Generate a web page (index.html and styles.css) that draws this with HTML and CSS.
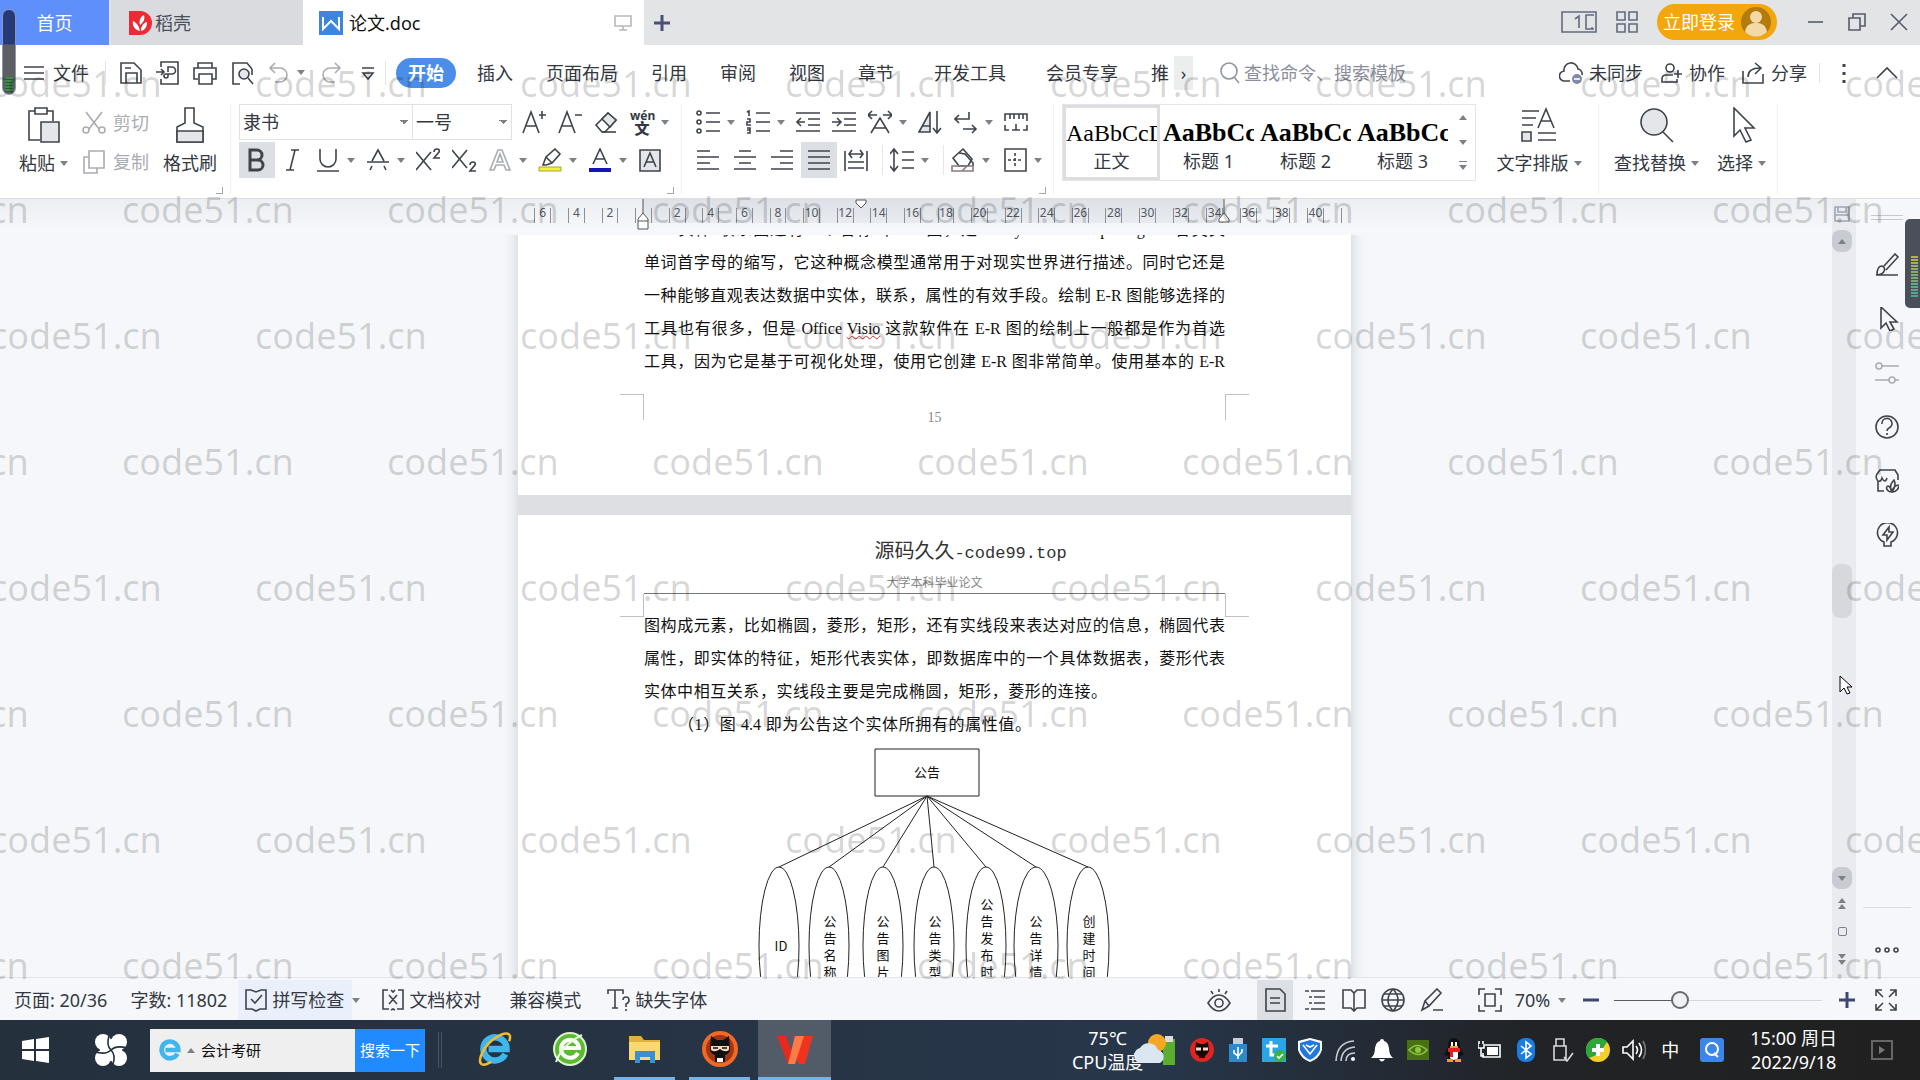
FILE: index.html
```html
<!DOCTYPE html>
<html lang="zh-CN">
<head>
    <meta charset="UTF-8">
    <meta name="viewport" content="width=device-width, initial-scale=1.0">
    <title>论文.doc</title>
    <link rel="stylesheet" href="styles.css">
</head>
<body>
    <header class="titlebar">
        <button class="tab tab-home">首页</button>
        <button class="tab tab-docer">
            <svg class="i24" viewBox="0 0 24 24"><path fill="#ee2b35" d="M1 0h11a12 12 0 0 1 0 24H1z"/><path fill="#fff" d="M12 20C7 19 4 15 5 10c4 2 6 5 7 10zM12 14c-1-4 0-8 4-10 1 4 0 7-4 10zM13 20c0-5 2-8 6-9 0 5-2 8-6 9z"/></svg>
            稻壳
        </button>
        <div class="tab tab-doc">
            <svg class="i24" viewBox="0 0 24 24"><path fill="#3c86e0" d="M0 0h24v24H0z"/><path d="M4 6v12l8-8 8 8V6" fill="none" stroke="#fff" stroke-width="2"/></svg>
            <span>论文.doc</span>
            <svg class="i18 tab-screen" viewBox="0 0 18 18"><path d="M1 2h16v10H1zM9 12v4M5 16h8" fill="none" stroke="#b5b8bd"/></svg>
        </div>
        <button class="tab-add" aria-label="新建"><svg class="i18" viewBox="0 0 18 18"><path d="M9 1v16M1 9h16" stroke="#4a4f78" stroke-width="3"/></svg></button>
        <div class="win">
            <button aria-label="布局"><svg width="36" height="22" viewBox="0 0 36 22"><path d="M1 1h34v20H1zM14 8l4-3v12M33 4h-8v14h8M30 17h2" fill="none" stroke="#626a80"/></svg></button>
            <button aria-label="应用"><svg class="i24" viewBox="0 0 24 24"><path d="M2 2h8v8H2zM14 2h8v8h-8zM2 14h8v8H2zM14 14h8v8h-8z" fill="none" stroke="#626a80"/></svg></button>
            <button class="login">立即登录
                <svg width="30" height="30" viewBox="0 0 30 30"><circle cx="15" cy="15" r="15" fill="#b57a0c"/><circle cx="15" cy="10" r="6" fill="#f3d9a6"/><path d="M4 25c1-7 5-9 11-9s10 2 11 9a15 15 0 0 1-22 0z" fill="#f3d9a6"/></svg>
            </button>
            <button aria-label="最小化"><svg class="i24" viewBox="0 0 24 24"><path class="w" d="M5 12h15"/></svg></button>
            <button aria-label="还原"><svg class="i24" viewBox="0 0 24 24"><path class="w" d="M4 8h11v12H4zM8 8V4h12v12h-5"/></svg></button>
            <button aria-label="关闭"><svg class="i24" viewBox="0 0 24 24"><path class="w" d="M4 4l16 16M20 4L4 20"/></svg></button>
        </div>
    </header>

    <nav class="menubar">
        <button class="file"><svg width="20" height="14" viewBox="0 0 20 14"><path d="M0 1h20M0 7h20M0 13h20"/></svg>文件</button>
        <div class="quick">
            <button aria-label="保存"><svg class="i24" viewBox="0 0 24 24"><path d="M2 2h13l7 7v13H2zM7 22V12h11v10M6 7h6"/></svg></button>
            <button aria-label="输出"><svg class="i24" viewBox="0 0 24 24"><path d="M5 6V1h17v22H5v-5M0 11h8M5 8l3 3-3 3M12 11V6h4a3 3 0 0 1 0 7h-4v2a2 2 0 1 1-2-2h4"/></svg></button>
            <button aria-label="打印"><svg class="i24" viewBox="0 0 24 24"><path d="M5 7V2h14v5M5 18H1V7h22v11h-4M6 13h13v10H6z"/></svg></button>
            <button aria-label="打印预览"><svg class="i24" viewBox="0 0 24 24"><path d="M22 8l-5-6H3v21h7M22 8v6"/><circle cx="14" cy="13" r="5" fill="#e4e6ea"/><path d="M18 17l5 6"/></svg></button>
            <button class="dim drop" aria-label="撤销"><svg class="i24" viewBox="0 0 24 24"><path d="M8 2L3 7l5 5M3 7h10a7 7 0 0 1 0 14H8"/></svg><i class="caret"></i></button>
            <button class="dim" aria-label="恢复"><svg class="i24" viewBox="0 0 24 24"><path d="M16 2l5 5-5 5M21 7H11a7 7 0 0 0 0 14h5"/></svg></button>
            <button aria-label="更多"><svg class="i24" viewBox="0 0 24 24"><path d="M6 7h12M7 12h10l-5 6z"/></svg></button>
        </div>
        <div class="tabs">
            <button class="on">开始</button>
            <button>插入</button>
            <button>页面布局</button>
            <button>引用</button>
            <button>审阅</button>
            <button>视图</button>
            <button>章节</button>
            <button class="wide">开发工具</button>
            <button class="wide">会员专享</button>
            <button class="cut">推</button>
        </div>
        <button class="next" aria-label="更多选项卡">›</button>
        <label class="search">
            <svg width="20" height="22" viewBox="0 0 20 22"><circle cx="9" cy="9" r="8"/><path d="M14 15l5 6"/></svg>
            <input type="text" placeholder="查找命令、搜索模板">
        </label>
        <div class="account">
            <button><svg class="i24" viewBox="0 0 24 24"><path d="M11 20H6a5 5 0 0 1-1-10 7 7 0 0 1 14-2 5 5 0 0 1 4 6"/><circle cx="18" cy="18" r="5" fill="#7f89a8" stroke="none"/><path d="M15 18h6" stroke="#fff"/></svg>未同步</button>
            <button><svg class="i24" viewBox="0 0 24 24"><circle cx="11" cy="7" r="4"/><path d="M14 14H7q-4 0-4 4v3h15v-3M15 13h8M19 9v8"/></svg>协作</button>
            <button><svg class="i24" viewBox="0 0 24 24"><path d="M2 10v12h20V13M7 16c0-6 4-9 12-9M14 2l6 5-6 6"/></svg>分享</button>
            <button class="dots" aria-label="更多"><svg width="6" height="20" viewBox="0 0 6 20"><path d="M3 1v3M3 9v3M3 17v3" stroke-width="3"/></svg></button>
            <button aria-label="收起"><svg class="i24" viewBox="0 0 24 24"><path d="M2 17L12 7l10 10"/></svg></button>
        </div>
    </nav>

    <section class="ribbon">
        <div class="group clip">
            <button class="big"><svg width="34" height="36" viewBox="0 0 34 36"><path d="M8 4H2v29h11M20 4h6v10M8 1h12v6H8z"/><path d="M14 15h18v20H14z" fill="#e4e6ea"/></svg><span>粘贴<i class="caret"></i></span></button>
            <div class="stack">
                <button class="dim"><svg class="i24" viewBox="0 0 24 24"><path d="M4 1l13 17M20 1L7 18"/><circle cx="4" cy="19" r="3"/><circle cx="20" cy="19" r="3"/></svg>剪切</button>
                <button class="dim"><svg class="i24" viewBox="0 0 24 24"><path d="M7 1h15v17H7zM7 7H2v16h13v-5"/></svg>复制</button>
            </div>
            <button class="big brush"><svg width="30" height="36" viewBox="0 0 30 36"><path d="M2 35V20l8-4V1h9v15l9 4v15z"/><path d="M2 24h26v11H2z" fill="#e4e6ea"/></svg><span>格式刷</span></button>
            <i class="corner"></i>
        </div>

        <div class="group font">
            <div class="row">
                <select class="face" aria-label="字体"><option>隶书</option></select>
                <select class="size" aria-label="字号"><option>一号</option></select>
                <button aria-label="增大字号"><svg class="i24" viewBox="0 0 24 24"><path d="M1 23L9 2l8 21M4 16h10M17 5h7M20 1v8"/></svg></button>
                <button aria-label="减小字号"><svg class="i24" viewBox="0 0 24 24"><path d="M1 23L9 2l8 21M4 16h10M17 5h7"/></svg></button>
                <button aria-label="清除格式"><svg class="i24" viewBox="0 0 24 24"><path d="M2 15L14 3l8 7-11 12H8z"/><path d="M8 9l8 8 6-7-8-7z" fill="#e4e6ea"/><path d="M8 22h14"/></svg></button>
                <button class="drop" aria-label="拼音指南"><span class="wen">wén<b>文</b></span><i class="caret"></i></button>
            </div>
            <div class="row">
                <button class="pressed" aria-label="加粗"><svg class="i24" viewBox="0 0 24 24"><path d="M5 2h7a5 5 0 0 1 0 10H5zM5 12h8a5 5 0 0 1 0 10H5z" stroke-width="3"/></svg></button>
                <button aria-label="倾斜"><svg class="i24" viewBox="0 0 24 24"><path d="M10 2h8M5 22h8M14 2L9 22"/></svg></button>
                <button class="drop" aria-label="下划线"><svg class="i24" viewBox="0 0 24 24"><path d="M4 1v10a8 8 0 0 0 16 0V1M1 23h22"/></svg><i class="caret"></i></button>
                <button class="drop" aria-label="删除线"><svg class="i24" viewBox="0 0 24 24"><path d="M6 13l6-11 6 11M1 14h22M4 22l2-4M20 22l-2-4"/></svg><i class="caret"></i></button>
                <button aria-label="上标"><svg class="i24" viewBox="0 0 24 24"><path d="M0 4l15 18M15 4L0 22M18 4q0-3 3-3t2 3l-5 6h6"/></svg></button>
                <button aria-label="下标"><svg class="i24" viewBox="0 0 24 24"><path d="M0 2l15 18M15 2L0 20M18 17q0-3 3-3t2 3l-5 6h6"/></svg></button>
                <button class="drop dim" aria-label="文字效果"><svg class="i24" viewBox="0 0 24 24"><path d="M2 22L10 2h4l8 20h-4l-2-5H8l-2 5zM9 14h6l-3-8z"/></svg><i class="caret"></i></button>
                <button class="drop" aria-label="突出显示"><svg class="i24" viewBox="0 0 24 24"><path d="M5 17l3-8 9-8 5 5-8 9-6 2zM8 9l6 6"/><path d="M1 19h22v4H1z" fill="#f4f03c" stroke="#a8a43a" stroke-width="1"/></svg><i class="caret"></i></button>
                <button class="drop" aria-label="字体颜色"><svg class="i24" viewBox="0 0 24 24"><path d="M5 16l7-15 7 15M7 11h10"/><path d="M1 22h22" stroke="#1414b8" stroke-width="4"/></svg><i class="caret"></i></button>
                <button aria-label="字符底纹"><svg class="i24" viewBox="0 0 24 24"><path d="M2 2h20v21H2z" fill="#e4e6ea"/><path d="M6 19l6-14 6 14M8 14h8"/></svg></button>
            </div>
            <i class="corner"></i>
        </div>

        <div class="group para">
            <div class="row">
                <button class="drop" aria-label="项目符号"><svg class="i24" viewBox="0 0 24 24"><path d="M10 3h14M10 12h14M10 21h14"/><circle cx="3" cy="3" r="2"/><circle cx="3" cy="12" r="2"/><circle cx="3" cy="21" r="2"/></svg><i class="caret"></i></button>
                <button class="drop" aria-label="编号"><svg class="i24" viewBox="0 0 24 24"><path d="M10 3h14M10 12h14M10 21h14M1 2l2-1v5M1 9h3v3H1v3h4M1 18h3v5H1M1 20h3"/></svg><i class="caret"></i></button>
                <button aria-label="减少缩进"><svg class="i24" viewBox="0 0 24 24"><path d="M0 3h24M12 9h12M12 15h12M0 21h24M1 12h8M5 8l-4 4 4 4"/></svg></button>
                <button aria-label="增加缩进"><svg class="i24" viewBox="0 0 24 24"><path d="M0 3h24M12 9h12M12 15h12M0 21h24M0 12h8M5 8l4 4-4 4"/></svg></button>
                <button class="drop" aria-label="中文版式"><svg class="i24" viewBox="0 0 24 24"><path d="M3 23l9-15 9 15M6 18h12M0 5h9M4 1L0 5l4 4M24 5h-9M20 1l4 4-4 4"/></svg><i class="caret"></i></button>
                <button aria-label="排序"><svg class="i24" viewBox="0 0 24 24"><path d="M1 22L12 2v20zM4 16h8" fill="#e4e6ea"/><path d="M19 1v21M15 18l4 5 4-5"/></svg></button>
                <button class="drop" aria-label="编辑标记"><svg class="i24" viewBox="0 0 24 24"><path d="M15 2v7H1M5 5L1 9l4 4M9 19h13M18 15l4 4-4 4"/></svg><i class="caret"></i></button>
                <button aria-label="制表位"><svg class="i24" viewBox="0 0 24 24"><path d="M1 11V4h22v7M6 4v5M10 4v5M15 4v5M19 4v5M5 20H1v-5M19 20h4v-5M8 20h8M12 20v-6"/></svg></button>
            </div>
            <div class="row">
                <button aria-label="左对齐"><svg class="i24" viewBox="0 0 24 24"><path d="M1 3h13M1 9h22M1 15h13M1 21h22"/></svg></button>
                <button aria-label="居中"><svg class="i24" viewBox="0 0 24 24"><path d="M6 3h12M1 9h22M6 15h12M1 21h22"/></svg></button>
                <button aria-label="右对齐"><svg class="i24" viewBox="0 0 24 24"><path d="M10 3h13M1 9h22M10 15h13M1 21h22"/></svg></button>
                <button class="pressed" aria-label="两端对齐"><svg class="i24" viewBox="0 0 24 24"><path d="M1 3h22M1 9h22M1 15h22M1 21h22"/></svg></button>
                <button aria-label="分散对齐"><svg class="i24" viewBox="0 0 24 24"><path d="M1 3v20M23 3v20M4 14h16M4 20h16M5 6h14M8 2L5 6l3 4M16 2l3 4-3 4"/></svg></button>
                <button class="drop sep" aria-label="行距"><svg class="i24" viewBox="0 0 24 24"><path d="M4 2v20M0 6l4-5 4 5M0 18l4 5 4-5M12 4h12M12 12h12M12 20h12"/></svg><i class="caret"></i></button>
                <button class="drop sep" aria-label="底纹"><svg class="i24" viewBox="0 0 24 24"><path d="M12 1L2 10l6 8h9l4-7zM8 5l6 1 8 9v3"/><path d="M1 18h21v5H1zM11 23l5-5" stroke="#8a7a80"/></svg><i class="caret"></i></button>
                <button class="drop" aria-label="边框"><svg class="i24" viewBox="0 0 24 24"><path d="M2 1h21v22H2z"/><path d="M12 5v15M5 12h15" stroke-dasharray="3 2"/></svg><i class="caret"></i></button>
            </div>
            <i class="corner"></i>
        </div>

        <div class="gallery">
            <button class="style current"><span class="sample">AaBbCcDd</span>正文</button>
            <button class="style"><span class="sample head">AaBbCc</span>标题 1</button>
            <button class="style"><span class="sample head">AaBbCc</span>标题 2</button>
            <button class="style"><span class="sample head">AaBbCc</span>标题 3</button>
            <div class="gallery-nav">
                <button aria-label="上"><i class="caret up"></i></button>
                <button aria-label="下"><i class="caret"></i></button>
                <button class="more" aria-label="展开"><i class="caret"></i></button>
            </div>
        </div>

        <div class="group tools">
            <button class="big"><svg width="36" height="36" viewBox="0 0 36 36"><path d="M1 4h17M1 11h14M1 18h11M17 21l8-19 8 19M20 14h10M17 26h18M17 33h18"/><path d="M1 25h9v9H1z" fill="#e4e6ea"/></svg><span>文字排版<i class="caret"></i></span></button>
        </div>
        <div class="group tools pair">
            <button class="big"><svg width="36" height="36" viewBox="0 0 36 36"><circle cx="15" cy="15" r="13" fill="#e4e6ea"/><path d="M24 25l10 10"/></svg><span>查找替换<i class="caret"></i></span></button>
            <button class="big"><svg width="36" height="36" viewBox="0 0 36 36"><path d="M10 1v28l6-6 6 12 5-2-6-12h9z"/></svg><span>选择<i class="caret"></i></span></button>
        </div>
    </section>

    <main class="work">
        <div class="desk">
            <div class="ruler">
                <div class="scale">
                    <div><b>6</b></div><div><b>4</b></div><div><b>2</b></div><div><b></b></div>
                    <div><b>2</b></div><div><b>4</b></div><div><b>6</b></div><div><b>8</b></div><div><b>10</b></div>
                    <div><b>12</b></div><div><b>14</b></div><div><b>16</b></div><div><b>18</b></div><div><b>20</b></div>
                    <div><b>22</b></div><div><b>24</b></div><div><b>26</b></div><div><b>28</b></div><div><b>30</b></div>
                    <div><b>32</b></div><div><b>34</b></div><div><b>36</b></div><div><b>38</b></div><div><b>40</b></div>
                    <div><b class="end"></b></div>
                    <svg class="mark left" viewBox="0 0 12 32"><path d="M6 0v14l-5 6v10h10V20L6 14M1 22h10"/></svg>
                    <svg class="mark first" viewBox="0 0 12 32"><path d="M1 1h10v3L6 9 1 4z"/></svg>
                    <svg class="mark right" viewBox="0 0 12 32"><path d="M6 0v14l-5 6v3h10v-3l-5-6"/></svg>
                </div>
            </div>
            <div class="pane">
                <div class="pages">
                    <article class="page first-page">
                        <p class="line indent">实体-联系图还有一个名称叫 E-R 图，是 Entity Relationship Diagram 各英文</p>
                        <p class="line">单词首字母的缩写，它这种概念模型通常用于对现实世界进行描述。同时它还是</p>
                        <p class="line">一种能够直观表达数据中实体，联系，属性的有效手段。绘制 E-R 图能够选择的</p>
                        <p class="line">工具也有很多，但是 Office <u>Visio</u> 这款软件在 E-R 图的绘制上一般都是作为首选</p>
                        <p class="line">工具，因为它是基于可视化处理，使用它创建 E-R 图非常简单。使用基本的 E-R</p>
                        <footer class="page-foot"><i></i><span>15</span><i></i></footer>
                    </article>
                    <article class="page">
                        <header class="page-head">
                            <h1>源码久久<span>-code99.top</span></h1>
                            <h2>大学本科毕业论文</h2>
                        </header>
                        <div class="crop"><i></i><i></i></div>
                        <p class="line">图构成元素，比如椭圆，菱形，矩形，还有实线段来表达对应的信息，椭圆代表</p>
                        <p class="line">属性，即实体的特征，矩形代表实体，即数据库中的一个具体数据表，菱形代表</p>
                        <p class="line short">实体中相互关系，实线段主要是完成椭圆，矩形，菱形的连接。</p>
                        <p class="line caption">（1）图 4.4 即为公告这个实体所拥有的属性值。</p>
                        <svg class="diagram" width="360" height="290" viewBox="0 0 360 290">
                            <path d="M121 8h104v47H121zM173 55L25 126M173 55L75 126M173 55l-44 71M173 55l7 71M173 55l59 71M173 55l109 71M173 55l161 71"/>
                            <ellipse cx="25" cy="205" rx="20" ry="79"/><ellipse cx="75" cy="205" rx="20" ry="79"/>
                            <ellipse cx="129" cy="205" rx="20" ry="79"/><ellipse cx="180" cy="205" rx="20" ry="79"/>
                            <ellipse cx="232" cy="205" rx="20" ry="79"/><ellipse cx="282" cy="205" rx="22" ry="79"/>
                            <ellipse cx="334" cy="205" rx="21" ry="79"/>
                            <text x="173" y="36">公告</text>
                            <text x="27" y="210">ID</text>
                            <text><tspan x="76" y="185">公</tspan><tspan x="76" y="202">告</tspan><tspan x="76" y="219">名</tspan><tspan x="76" y="236">称</tspan></text>
                            <text><tspan x="129" y="185">公</tspan><tspan x="129" y="202">告</tspan><tspan x="129" y="219">图</tspan><tspan x="129" y="236">片</tspan></text>
                            <text><tspan x="181" y="185">公</tspan><tspan x="181" y="202">告</tspan><tspan x="181" y="219">类</tspan><tspan x="181" y="236">型</tspan></text>
                            <text><tspan x="233" y="168">公</tspan><tspan x="233" y="185">告</tspan><tspan x="233" y="202">发</tspan><tspan x="233" y="219">布</tspan><tspan x="233" y="236">时</tspan></text>
                            <text><tspan x="282" y="185">公</tspan><tspan x="282" y="202">告</tspan><tspan x="282" y="219">详</tspan><tspan x="282" y="236">情</tspan></text>
                            <text><tspan x="335" y="185">创</tspan><tspan x="335" y="202">建</tspan><tspan x="335" y="219">时</tspan><tspan x="335" y="236">间</tspan></text>
                        </svg>
                    </article>
                </div>
            </div>
        </div>

        <div class="scroller">
            <svg class="i18" viewBox="0 0 18 18"><path d="M2 2h14v14H2zM5 2v5h8V2M2 10h14"/></svg>
            <button class="knob" aria-label="向上"><i class="caret up"></i></button>
            <div class="track"><div class="thumb"></div></div>
            <button class="knob" aria-label="向下"><i class="caret"></i></button>
            <button class="jump" aria-label="上一页"><i class="caret up"></i><i class="caret up"></i></button>
            <button class="jump" aria-label="选择浏览对象"><i class="square"></i></button>
            <button class="jump" aria-label="下一页"><i class="caret"></i><i class="caret"></i></button>
        </div>

        <aside class="rail">
            <i class="grip"></i>
            <button aria-label="样式"><svg class="i24" viewBox="0 0 24 24"><path d="M1 22h22M2 22c0-6 1-9 5-9 4 1 4 8-5 9M9 13L20 1l3 3-12 13"/></svg></button>
            <button aria-label="选择"><svg class="i24" viewBox="0 0 24 24"><path d="M6 0v21l5-5 4 8 4-2-4-7h7z"/></svg></button>
            <button class="dim" aria-label="属性"><svg class="i24" viewBox="0 0 24 24"><path d="M7 5h17M0 19h14M20 19h4"/><circle cx="4" cy="5" r="3"/><circle cx="17" cy="19" r="3"/></svg></button>
            <button aria-label="帮助"><svg class="i24" viewBox="0 0 24 24"><circle cx="12" cy="12" r="11"/><path d="M7 9a5 5 0 1 1 7 4q-2 1-2 3M12 18v2"/></svg></button>
            <button aria-label="商店"><svg class="i24" viewBox="0 0 24 24"><path d="M9 22H3V12q-3-3-1-7l3-4h15l3 5v5M3 12q3 1 4-3 3 6 5 0M17 23c-5 0-7-5-4-6 1 0 3 2 4 6zM17 23c-3-5-1-9 2-12 2 4 1 8-2 12zM17 23c1-5 3-7 7-7 0 4-3 7-7 7z"/></svg></button>
            <button aria-label="灵感"><svg class="i24" viewBox="0 0 24 24"><path d="M9 23v-4a10 10 0 1 1 7 0v4zM14 4l-6 8h4v5l6-8h-4z"/></svg></button>
            <button class="rail-more" aria-label="更多"><svg class="i24" viewBox="0 0 24 24"><circle cx="3" cy="12" r="2"/><circle cx="12" cy="12" r="2"/><circle cx="21" cy="12" r="2"/></svg></button>
        </aside>
    </main>

    <footer class="status">
        <button>页面: 20/36</button>
        <button class="words">字数: 11802</button>
        <button class="spell"><svg class="i24" viewBox="0 0 24 24"><path d="M7 2H2v19h6l4 2 4-2h6V2h-5l-5 2zM7 11l4 4 7-8"/></svg>拼写检查<i class="caret"></i></button>
        <button class="proof"><svg class="i24" viewBox="0 0 24 24"><path d="M7 2H2v19h6M17 2h5v19h-6M8 7l8 9M16 7l-8 9M10 2l2 2 2-2M10 22l2-1 2 1"/></svg>文档校对</button>
        <button class="compat">兼容模式</button>
        <button class="missing"><svg class="i24" viewBox="0 0 24 24"><path d="M1 6V2h15v4M8 2v18M5 20h6M16 12q0-3 3-3t3 3-3 4v3M19 21v2"/></svg>缺失字体</button>
        <div class="views">
            <button aria-label="护眼模式"><svg class="i24" viewBox="0 0 24 24"><path d="M1 15q5-8 11-8t11 8q-5 8-11 8T1 15zM12 1v3M4 3l2 3M20 3l-2 3"/><circle cx="12" cy="15" r="4"/></svg></button>
            <button class="pressed" aria-label="页面视图"><svg class="i24" viewBox="0 0 24 24"><path d="M3 1h14l5 5v17H3zM7 10h10M7 15h10"/></svg></button>
            <button aria-label="大纲"><svg class="i24" viewBox="0 0 24 24"><path d="M2 3h4M8 3h14M6 9h3M11 9h11M6 15h3M11 15h11M2 21h4M8 21h14"/></svg></button>
            <button aria-label="阅读版式"><svg class="i24" viewBox="0 0 24 24"><path d="M1 2h8l3 3 3-3h8v18h-8l-3 3-3-3H1zM12 5v17"/></svg></button>
            <button aria-label="Web版式"><svg class="i24" viewBox="0 0 24 24"><circle cx="12" cy="12" r="11"/><path d="M1 12h22M3 6h18M3 18h18M12 1q-10 11 0 22M12 1q10 11 0 22"/></svg></button>
            <button aria-label="写作模式"><svg class="i24" viewBox="0 0 24 24"><path d="M2 22l3-9L17 1l4 4L9 18zM5 13l4 5M13 22h10"/></svg></button>
            <button class="fit" aria-label="最佳显示比例"><svg class="i24" viewBox="0 0 24 24"><path d="M1 7V1h6M17 1h6v6M23 17v6h-6M7 23H1v-6M7 6h10v12H7z"/></svg></button>
            <button class="pct">70%<i class="caret"></i></button>
            <button class="step" aria-label="缩小"><svg class="i18" viewBox="0 0 18 18"><path d="M1 9h16" stroke="#3f4770" stroke-width="3"/></svg></button>
            <input type="range" min="0" max="100" value="30" aria-label="显示比例">
            <button class="step" aria-label="放大"><svg class="i18" viewBox="0 0 18 18"><path d="M9 1v16M1 9h16" stroke="#3f4770" stroke-width="3"/></svg></button>
            <button aria-label="全屏"><svg class="i24" viewBox="0 0 24 24"><path d="M2 8V2h6M2 2l7 7M16 2h6v6M22 2l-7 7M22 16v6h-6M22 22l-7-7M8 22H2v-6M2 22l7-7"/></svg></button>
        </div>
    </footer>

    <div class="taskbar">
        <button class="app start" aria-label="开始"><svg width="28" height="28" viewBox="0 0 28 28"><path fill="#fff" d="M0 5l12-2v10H0zM14 3l13-2v12H14zM0 15h12v10L0 23zM14 15h13v12l-13-2z"/></svg></button>
        <button class="app" aria-label="sogou"><svg width="34" height="34" viewBox="0 0 34 34"><g fill="#fff"><circle cx="9" cy="9" r="8"/><circle cx="25" cy="9" r="8"/><circle cx="9" cy="25" r="8"/><circle cx="25" cy="25" r="8"/><circle cx="17" cy="17" r="11"/></g><path d="M17 17Q12 12 15 3M17 17q5-5 16-2M17 17q5 5 2 14M17 17q-5 5-16 2" stroke="#25303d"/></svg></button>
        <form class="find">
            <svg width="26" height="28" viewBox="0 0 28 28"><use href="#ie"/></svg>
            <i class="caret up"></i>
            <input type="text" value="会计考研" aria-label="搜索">
            <button type="button">搜索一下</button>
        </form>
        <i class="divide"></i>
        <div class="apps">
            <button class="app" aria-label="Internet Explorer"><svg width="36" height="36" viewBox="0 0 28 28"><symbol id="ie" viewBox="0 0 28 28"><path d="M22 18a9 9 0 1 1 1-4H9" fill="none" stroke="#3fb6ee" stroke-width="5"/></symbol><use href="#ie"/><path d="M25 8c3-8-4-7-10-3C6 10-1 24 4 26c2 1 5-1 7-2" fill="none" stroke="#f0bc32" stroke-width="2"/></svg></button>
            <button class="app" aria-label="360浏览器"><svg width="36" height="36" viewBox="0 0 36 36"><circle cx="18" cy="18" r="16" fill="#5abb2f" stroke="#dff2d0" stroke-width="2"/><path d="M26 22a9 9 0 1 1 1-5H11" fill="none" stroke="#fff" stroke-width="4"/><path d="M4 31Q10 14 30 4" fill="none" stroke="#e9f8d8" stroke-width="2"/></svg></button>
            <button class="app open" aria-label="文件资源管理器"><svg width="36" height="36" viewBox="0 0 36 36"><path fill="#e3b23e" d="M2 5h12l3 4h16v20H2z"/><path fill="#fbd971" d="M2 11h31v18H2z"/><path fill="#3c8fd0" d="M8 20h20v12h-5v-6h-10v6H8z"/></svg></button>
            <button class="app open" aria-label="cat"><svg width="38" height="38" viewBox="0 0 38 38"><circle cx="19" cy="19" r="18" fill="#ee6a26"/><circle cx="19" cy="19" r="14" fill="#a53412"/><path fill="#111" d="M10 6l6 4h6l6-4 1 14q-1 4-5 5v7H14v-7q-4-1-5-5z"/><path fill="#f5d8c0" d="M10 16h18v4q-4 3-9-1-5 4-9 1z"/><path stroke="#111" d="M12 18h5M21 18h5"/><path fill="#fff" d="M16 28h6v4h-6z"/></svg></button>
            <button class="app open active" aria-label="WPS"><svg width="38" height="36" viewBox="0 0 38 36"><path fill="#e8291d" d="M1 5h9l6 16 4-9h6l-7 21h-7z"/><path fill="#f0331f" d="M28 5h9l-8 28h-6l-4-9z"/><path fill="#ff7a45" d="M19 5h9l-9 28h-7z"/></svg></button>
        </div>
        <div class="weather"><span>75℃<br>CPU温度</span>
            <svg width="46" height="34" viewBox="0 0 46 34"><path d="M32 6h12v26H32z" fill="#5cae31"/><path d="M34 3h8v6h-8z" fill="#ddd"/><circle cx="26" cy="10" r="9" fill="#f5a623"/><path d="M8 30a8 8 0 0 1 1-15 10 10 0 0 1 18 2 7 7 0 0 1 2 13z" fill="#dbe6f3"/></svg>
        </div>
        <div class="tray">
            <button aria-label="cat"><svg class="i24" viewBox="0 0 24 24"><circle cx="12" cy="12" r="12" fill="#e02420"/><path fill="#160808" d="M6 4l4 2h4l4-2 1 9q-2 4-4 5v2H9v-2q-3-1-4-5z"/><path d="M6 11h5M13 11h5" stroke="#f5d8c0" stroke-width="3"/></svg></button>
            <button aria-label="U盘"><svg class="i24" viewBox="0 0 24 24"><path fill="#c8ced6" d="M7 0h10v7H7z"/><path fill="#2f88c9" d="M3 6h18v18H3z"/><path d="M12 9v12M8 12v3l4 3 4-4v-3" stroke="#fff"/></svg></button>
            <button aria-label="同步"><svg class="i24" viewBox="0 0 24 24"><path fill="#2aa5e8" d="M0 0h24v24H0z"/><path d="M9 3v14h5M4 8h12" stroke="#fff" stroke-width="3"/><circle cx="18" cy="18" r="6" fill="#35b34a"/><path d="M15 18l2 2 4-4" stroke="#fff"/></svg></button>
            <button aria-label="管家"><svg class="i24" viewBox="0 0 24 24"><path fill="#fff" d="M0 3l12-3 12 3v9q-3 9-12 12Q3 21 0 12z"/><path fill="#1e78e0" d="M2 5l10-3 10 3v7q-3 7-10 10Q5 19 2 12z"/><path d="M5 7l7 9 7-9M8 7l4 2 4-2" stroke="#fff"/></svg></button>
            <button aria-label="网络"><svg class="i24" viewBox="0 0 24 24"><path d="M2 23Q3 4 20 3M7 23q1-13 14-14M12 23q0-8 9-8" stroke="#c9ced6"/><circle cx="19" cy="21" r="2" fill="#fff"/></svg></button>
            <button aria-label="通知"><svg class="i24" viewBox="0 0 24 24"><path fill="#fff" d="M1 20q4-3 4-10 1-6 5-7a2 2 0 0 1 4 0q4 1 5 7 0 7 4 10zM9 21h6q-3 5-6 0z"/></svg></button>
            <button aria-label="NVIDIA"><svg class="i24" viewBox="0 0 24 24"><path fill="#4a7014" d="M1 2h22v20H1z"/><path d="M3 12q8-9 18 0-8 9-18 0z" stroke="#8cc63f"/><circle cx="12" cy="12" r="3" fill="#8cc63f"/></svg></button>
            <button aria-label="QQ"><svg class="i24" viewBox="0 0 24 24"><path fill="#111" d="M6 9Q6 0 12 0t6 9l4 8-4 1v4H6v-4l-4-1z"/><path fill="#fff" d="M8 12h8v8q-4 4-8 0zM9 4h2v4H9zM13 4h2v4h-2z"/><path fill="#e02424" d="M6 10h12v4H6zM8 13h3v6H8z"/><path fill="#f0a020" d="M8 8h8v2H8zM5 21h6v3H5zM13 21h6v3h-6z"/></svg></button>
            <button aria-label="电源"><svg class="i24" viewBox="0 0 24 24"><path d="M7 7h15v12H5v-4M0 6v4h6V6M3 10v8h3M1 3v3M5 3v3" stroke="#fff"/><path fill="#fff" d="M9 9h11v8H9z"/></svg></button>
            <button aria-label="蓝牙"><svg class="i24" viewBox="0 0 24 24"><rect x="3" width="18" height="24" rx="8" fill="#1a7ee0"/><path d="M7 8l10 8-5 4V4l5 4-10 8" stroke="#fff"/></svg></button>
            <button aria-label="弹出"><svg class="i24" viewBox="0 0 24 24"><path d="M4 8h12v14H4zM6 8V1h8v7M14 19l3 4 6-8" stroke="#d6d8dc"/></svg></button>
            <button aria-label="360"><svg class="i24" viewBox="0 0 24 24"><circle cx="12" cy="12" r="12" fill="#f3d129"/><path fill="#2aa83a" d="M12 0a12 12 0 0 0-9 20Q13 18 21 4a12 12 0 0 0-9-4z"/><path d="M12 6v12M6 12h12" stroke="#fff" stroke-width="4"/></svg></button>
            <button aria-label="音量"><svg class="i24" viewBox="0 0 24 24"><path d="M1 9h4l6-6v18l-6-6H1zM14 8q3 4 0 8M17 5q5 7 0 14" stroke="#fff"/><path d="M21 3q5 9 0 18" stroke="#777"/></svg></button>
            <button class="ime">中</button>
            <button class="q" aria-label="Q"><svg class="i24" viewBox="0 0 24 24"><rect width="24" height="24" rx="3" fill="#3c86ea"/><circle class="ring" cx="12" cy="11" r="6"/><path d="M14 15l4 4" stroke="#fff" stroke-width="2"/></svg></button>
        </div>
        <div class="clock">15:00 周日<br>2022/9/18</div>
        <button class="notice" aria-label="操作中心"><svg class="i24" viewBox="0 0 24 24"><path d="M2 3h20v18H2z" stroke="#666" stroke-width="2"/><path d="M9 8l6 4-6 4z" fill="#777"/></svg></button>
    </div>

    <div class="meter meter-left"><i></i></div>
    <div class="meter meter-right"><i></i></div>
    <svg class="pointer" viewBox="0 0 14 20"><path d="M1 1v16l4-4 3 6 3-1-3-6h5z" fill="#fff" stroke="#000"/></svg>

    <div class="watermark" aria-hidden="true">
        <div><span>code51.cn</span><span>code51.cn</span><span>code51.cn</span><span>code51.cn</span><span>code51.cn</span><span>code51.cn</span><span>code51.cn</span><span>code51.cn</span></div>
        <div><span>code51.cn</span><span>code51.cn</span><span>code51.cn</span><span>code51.cn</span><span>code51.cn</span><span>code51.cn</span><span>code51.cn</span><span>code51.cn</span></div>
        <div><span>code51.cn</span><span>code51.cn</span><span>code51.cn</span><span>code51.cn</span><span>code51.cn</span><span>code51.cn</span><span>code51.cn</span><span>code51.cn</span></div>
        <div><span>code51.cn</span><span>code51.cn</span><span>code51.cn</span><span>code51.cn</span><span>code51.cn</span><span>code51.cn</span><span>code51.cn</span><span>code51.cn</span></div>
        <div><span>code51.cn</span><span>code51.cn</span><span>code51.cn</span><span>code51.cn</span><span>code51.cn</span><span>code51.cn</span><span>code51.cn</span><span>code51.cn</span></div>
        <div><span>code51.cn</span><span>code51.cn</span><span>code51.cn</span><span>code51.cn</span><span>code51.cn</span><span>code51.cn</span><span>code51.cn</span><span>code51.cn</span></div>
        <div><span>code51.cn</span><span>code51.cn</span><span>code51.cn</span><span>code51.cn</span><span>code51.cn</span><span>code51.cn</span><span>code51.cn</span><span>code51.cn</span></div>
        <div><span>code51.cn</span><span>code51.cn</span><span>code51.cn</span><span>code51.cn</span><span>code51.cn</span><span>code51.cn</span><span>code51.cn</span><span>code51.cn</span></div>
    </div>
</body>
</html>
```
FILE: styles.css
```css
* {
    box-sizing: border-box;
}
body {
    margin: 0;
    height: 100vh;
    display: flex;
    flex-direction: column;
    position: relative;
    overflow: hidden;
    background: #fff;
    color: #333842;
    font: 18px/24px "Noto Sans", "Noto Sans CJK SC", sans-serif;
}
button {
    display: flex;
    align-items: center;
    justify-content: center;
    flex: none;
    padding: 0;
    border: 0;
    background: none;
    color: inherit;
    font: inherit;
    white-space: nowrap;
    cursor: pointer;
}
input, select {
    padding: 0;
    border: 0;
    background: none;
    color: inherit;
    font: inherit;
    outline: none;
}
svg {
    flex: none;
    fill: none;
    stroke: #3f444c;
    stroke-width: 1.6;
}
svg path[fill]:not([fill="none"]):not([fill="#e4e6ea"]):not([stroke]),
svg circle[fill]:not([fill="#e4e6ea"]):not([stroke]),
svg rect {
    stroke: none;
}
svg g {
    stroke: none;
}
.i24 {
    width: 24px;
    height: 24px;
}
.i18 {
    width: 18px;
    height: 18px;
}
.dim {
    color: #a9acb2;
}
.dim svg {
    stroke: #a9acb2;
}
.caret {
    border: 4px solid transparent;
    border-top: 5px solid #7d8087;
    border-bottom: 0;
}
.caret.up {
    border-top: 0;
    border-bottom: 5px solid #7d8087;
}
.pressed {
    background: #dce0e5;
}

/* title bar */
.titlebar {
    flex: none;
    display: flex;
    height: 45px;
    background: #e2e4e6;
}
.tab {
    display: flex;
    align-items: center;
}
.tab-home {
    width: 109px;
    margin-right: 2px;
    background: #5f8ffa;
    color: #fff;
}
.tab-docer {
    width: 192px;
    padding-left: 17px;
    justify-content: flex-start;
    gap: 3px;
    background: #d9dbde;
    color: #4a4f5c;
}
.tab-doc {
    width: 341px;
    padding: 0 12px 0 16px;
    gap: 6px;
    background: #fff;
    color: #111;
}
.tab-screen {
    margin-left: auto;
}
.tab-add {
    width: 36px;
}
.win {
    display: flex;
    align-items: center;
    margin-left: auto;
    padding-right: 9px;
    padding-bottom: 1px;
    gap: 18px;
}
.win .w {
    stroke: #555b6b;
}
.login {
    width: 120px;
    height: 36px;
    margin-right: 8px;
    gap: 6px;
    border-radius: 18px;
    background: #f2a70d;
    color: #fff;
}

/* menu bar */
.menubar {
    flex: none;
    display: flex;
    align-items: center;
    height: 55px;
    padding-left: 24px;
}
.file {
    gap: 9px;
    padding-right: 16px;
    border-right: 1px solid #e3e4e6;
}
.quick {
    display: flex;
    width: 280px;
    padding-left: 6px;
    border-right: 1px solid #e3e4e6;
}
.quick button {
    width: 37px;
}
.quick .drop {
    width: 52px;
    gap: 6px;
}
.tabs {
    display: flex;
    gap: 9px;
    margin-left: 10px;
}
.tabs button {
    height: 30px;
    padding: 0 12px;
}
.tabs .on {
    border-radius: 15px;
    background: #4a8eea;
    color: #fff;
    font-weight: bold;
}
.tabs .wide {
    margin-left: 7px;
}
.tabs .cut {
    padding-right: 5px;
}
.next {
    width: 19px;
    height: 34px;
    background: #eceded;
}
.search {
    display: flex;
    align-items: center;
    gap: 4px;
    margin-left: 27px;
}
.search svg {
    stroke: #9195a0;
}
.search input {
    width: 190px;
}
.search input::placeholder {
    color: #8b8f9c;
    opacity: 1;
}
.account {
    display: flex;
    align-items: center;
    margin-left: auto;
    padding-right: 21px;
    gap: 16px;
}
.account button {
    gap: 6px;
}
.account .dots {
    width: 48px;
    margin: 0 -8px 0 -4px;
    border-left: 1px solid #e3e4e6;
}

/* ribbon */
.ribbon {
    flex: none;
    display: flex;
    align-items: flex-start;
    height: 99px;
    padding-top: 4px;
    border-bottom: 1px solid #dcdee2;
}
.group {
    position: relative;
    display: flex;
    height: 90px;
    border-right: 1px solid #f0f1f2;
}
.corner {
    position: absolute;
    right: 7px;
    bottom: 0;
    width: 7px;
    height: 7px;
    border: solid #a5a8ae;
    border-width: 0 1px 1px 0;
}
.big {
    flex-direction: column;
    justify-content: flex-start;
    gap: 8px;
    height: 76px;
    padding-top: 3px;
}
.big span {
    display: flex;
    align-items: center;
    gap: 5px;
}
.clip {
    width: 231px;
    padding-left: 19px;
}
.clip .stack {
    display: flex;
    flex-direction: column;
    gap: 2px;
    margin-left: 14px;
}
.stack button {
    height: 37px;
    gap: 7px;
}
.brush {
    margin-left: 14px;
}
.font, .para {
    flex-direction: column;
    gap: 2px;
}
.font {
    width: 451px;
    padding-left: 8px;
}
.para {
    width: 372px;
    padding-left: 8px;
}
.row {
    display: flex;
}
.row button {
    width: 36px;
    height: 36px;
}
.row .drop {
    width: 50px;
    padding-left: 6px;
    gap: 7px;
    justify-content: flex-start;
}
.font .row:nth-child(2) button:nth-child(n+3) {
    margin-right: 1px;
    margin-left: -1px;
}
.row select {
    appearance: none;
    height: 36px;
    padding-left: 3px;
    border: 1px solid #e0e2e5;
    background: conic-gradient(from -45deg at 50% 100%, #7d8087 90deg, transparent 0) no-repeat right 4px center / 8px 4px;
}
.row .face {
    width: 173px;
    border-right: 0;
}
.size {
    width: 100px;
    margin-right: 4px;
}
.wen {
    width: 24px;
    font: bold 12px/12px "Noto Sans", "Noto Sans CJK SC", sans-serif;
}
.wen b {
    display: block;
    font-size: 15px;
}
.para .row:nth-child(2) {
    gap: 1px;
}
.para .sep {
    width: 60px;
    padding-left: 15px;
    background: linear-gradient(#e6e7ea, #e6e7ea) no-repeat 7px center / 1px 30px;
}

.gallery {
    display: flex;
    width: 414px;
    height: 77px;
    margin-left: 8px;
    border: 1px solid #e3e5e8;
}
.style {
    width: 97px;
    height: 75px;
    flex-direction: column;
    overflow: hidden;
    gap: 2px;
    padding: 2px 1px 0;
}
.style.current {
    border: 3px solid #dcdee1;
    padding: 2px 0 0;
}
.sample {
    width: 91px;
    height: 32px;
    overflow: hidden;
    color: #000;
    font: 24px/36px "Liberation Serif", serif;
    text-align: left;
}
.sample.head {
    font-size: 26px;
    font-weight: bold;
}
.gallery-nav {
    display: flex;
    flex-direction: column;
    flex: 1;
}
.gallery-nav button {
    flex: 1;
}
.gallery-nav .more .caret {
    position: relative;
}
.gallery-nav .more .caret::before {
    content: "";
    position: absolute;
    left: -4px;
    top: -9px;
    width: 8px;
    height: 1px;
    background: #7d8087;
}
.tools {
    width: 123px;
    padding-left: 4px;
    justify-content: center;
}
.pair {
    width: 179px;
    gap: 18px;
}

/* workspace */
.work {
    flex: 1;
    display: flex;
    min-height: 0;
    background: #f5f7fa;
}
.desk {
    flex: 1;
    display: flex;
    flex-direction: column;
    min-width: 0;
}
.ruler {
    flex: none;
    height: 36px;
    padding-left: 60px;
    background: linear-gradient(#eceef2, #f5f7fa 30px);
}
.scale {
    position: relative;
    display: flex;
    width: 840px;
    height: 24px;
    margin: 0 auto;
    background: linear-gradient(#dde0e6, #e8ebf0) no-repeat 117px 0 / 581px 24px;
}
.scale div {
    flex: 1;
    display: flex;
    justify-content: center;
    align-items: flex-end;
}
.scale b {
    width: 50%;
    height: 15px;
    border: solid #8a8f98;
    border-width: 0 1px;
    color: #555a63;
    font-size: 12px;
    font-weight: normal;
    line-height: 10px;
    text-align: center;
}
.scale .end {
    border-right: 0;
}
.mark {
    position: absolute;
    top: 0;
    width: 12px;
    height: 32px;
    fill: #fff;
    stroke: #555;
    stroke-width: 1;
}
.mark.left {
    left: 111px;
}
.mark.first {
    left: 329px;
}
.mark.right {
    left: 692px;
}
.pane {
    flex: 1;
    overflow: hidden;
    padding-left: 37px;
}
.pages {
    width: 833px;
    margin: 0 auto;
    background: #dddfe2;
    box-shadow: 0 0 14px #c9ccd1;
}
.page {
    padding: 0 126px;
    background: #fff;
    color: #111;
}
.first-page {
    height: 282px;
    margin-top: -22px;
    margin-bottom: 20px;
}
.line {
    margin: 0;
    font: 16px/33px "Liberation Serif", "Noto Sans CJK SC", serif;
    text-align: justify;
    text-align-last: justify;
    white-space: nowrap;
}
.line.indent {
    padding-left: 34px;
}
.line.short {
    margin-right: 118px;
}
.line.caption {
    margin: 0 194px 0 34px;
}
.line u {
    text-decoration: underline wavy #c33 1px;
}
.page-foot, .crop {
    display: flex;
    justify-content: space-between;
    margin: 0 -24px;
}
.page-foot {
    margin-top: 16px;
    color: #888;
    font: 14px/48px "Liberation Serif", serif;
}
.page-foot i, .crop i {
    width: 24px;
    height: 26px;
    border: solid #bfc1c4;
    border-width: 1px 1px 0 0;
}
.page-foot i:last-child {
    border-width: 1px 0 0 1px;
}
.page-head {
    padding-top: 21px;
    border-bottom: 1px solid #777;
    text-align: center;
}
.page-head h1 {
    margin: 0 0 0 72px;
    color: #333;
    font: 20px/28px "Noto Sans CJK SC", sans-serif;
}
.page-head h1 span {
    font: 17px/28px "Liberation Mono", monospace;
}
.page-head h2 {
    margin: 3px 0 0;
    color: #888;
    font: 12px/22px "Noto Sans CJK SC", sans-serif;
}
.crop {
    margin-bottom: -8px;
}
.crop i {
    height: 23px;
    border-width: 0 1px 1px 0;
}
.crop i:last-child {
    border-width: 0 0 1px 1px;
}
.diagram {
    display: block;
    margin-left: 110px;
    stroke: #222;
    stroke-width: 1;
}
.diagram text {
    fill: #111;
    stroke: none;
    font: 13px "Noto Sans CJK SC", sans-serif;
    text-anchor: middle;
}

.scroller {
    display: flex;
    flex-direction: column;
    align-items: center;
    width: 24px;
    padding: 6px 4px 4px 0;
    background: #e9ebf0;
}
.scroller svg {
    stroke: #a0a5b5;
}
.knob {
    width: 20px;
    height: 22px;
    margin-top: 7px;
    border-radius: 8px;
    background: #c9cbd2;
}
.track {
    flex: 1;
    padding-top: 312px;
}
.thumb {
    width: 20px;
    height: 54px;
    border-radius: 8px;
    background: #d6d8dd;
}
.jump {
    flex-direction: column;
    width: 20px;
    height: 28px;
    gap: 1px;
}
.square {
    width: 9px;
    height: 9px;
    border: 1px solid #7d8087;
    border-radius: 2px;
}
.rail {
    display: flex;
    flex-direction: column;
    align-items: center;
    width: 64px;
    padding-right: 3px;
}
.rail .grip {
    width: 32px;
    height: 5px;
    margin: 16px 0 18px;
    border: solid #c6c9ce;
    border-width: 1px 0;
}
.rail button {
    width: 48px;
    height: 54px;
}
.rail .rail-more {
    height: 70px;
    margin-top: auto;
    padding-top: 14px;
    border-top: 1px solid #d9dbe0;
}

/* status bar */
.status {
    flex: none;
    display: flex;
    align-items: center;
    height: 43px;
    padding: 2px 22px 0 14px;
    border-top: 1px solid #e2e4e8;
    background: #f5f7fa;
}
.words {
    margin: 0 11px 0 23px;
}
.spell {
    gap: 4px;
    height: 40px;
    padding: 0 6px;
    background: #eaf0fb;
}
.spell .caret {
    margin: 0 -14px 0 4px;
}
.proof {
    gap: 4px;
    margin-left: 29px;
}
.compat {
    margin: 0 26px 0 28px;
}
.missing {
    gap: 4px;
}
.views {
    display: flex;
    align-items: center;
    margin-left: auto;
}
.views button {
    width: 39px;
    height: 40px;
}
.views .pressed {
    width: 36px;
    margin: 0 2px 0 19px;
}
.views .fit {
    margin-left: 19px;
}
.views .pct {
    width: 63px;
    gap: 8px;
}
.views .step {
    width: 24px;
    margin: 0 7px;
}
.views button:last-child {
    width: 24px;
    margin-left: 8px;
}
.views input {
    appearance: none;
    width: 208px;
    height: 20px;
    margin: 0 6px 0 4px;
    background: linear-gradient(90deg, #555a63 33%, #d5d8de 33%) no-repeat center / 100% 1px;
}
.views input::-webkit-slider-thumb {
    appearance: none;
    width: 18px;
    height: 18px;
    border: 2px solid #666b74;
    border-radius: 50%;
    background: #f0f1f3;
}

/* taskbar */
.taskbar {
    flex: none;
    display: flex;
    align-items: center;
    height: 60px;
    padding-right: 26px;
    background: linear-gradient(90deg, #25303d, #27364a 60%, #212326 80%, #202020);
    color: #fff;
}
.app {
    width: 78px;
    height: 60px;
}
.start {
    width: 72px;
}
.find {
    display: flex;
    align-items: center;
    width: 275px;
    height: 43px;
    padding-left: 7px;
    gap: 4px;
    background: #efefef;
}
.find input {
    flex: 1;
    min-width: 0;
    padding-left: 2px;
    color: #111;
    font-size: 15px;
}
.find button {
    width: 70px;
    height: 43px;
    background: #1f8bff;
    font-size: 15px;
}
.divide {
    width: 4px;
    height: 36px;
    margin: 0 22px 0 13px;
    border: solid #4a5361;
    border-width: 0 1px;
}
.apps {
    display: flex;
    gap: 14px;
}
.apps .app {
    width: 61px;
    border-bottom: 3px solid transparent;
}
.apps .open {
    border-bottom-color: #76b4e8;
}
.apps .active {
    width: 73px;
    margin-left: -6px;
    background: #525b68;
}
.weather {
    display: flex;
    align-items: center;
    margin-left: auto;
    text-align: center;
}
.weather svg {
    margin-left: -12px;
}
.tray {
    display: flex;
    margin-left: 7px;
}
.tray button {
    width: 36px;
}
.tray svg {
    stroke: none;
}
.tray .ring {
    stroke: #fff;
    stroke-width: 2;
}
.tray .q {
    width: 48px;
}
.clock {
    margin-left: 14px;
    text-align: center;
}
.notice {
    margin-left: 33px;
}

/* things floating over the window */
.meter {
    position: absolute;
    display: flex;
    align-items: flex-end;
}
.meter-left {
    left: 2px;
    top: 9px;
    width: 14px;
    height: 86px;
    padding: 2px;
    border: 1px solid #8d97b5;
    border-radius: 7px;
    background: linear-gradient(#263a78 40%, #5d5f63 42%);
}
.meter i {
    flex: 1;
    height: 15px;
    background: repeating-linear-gradient(#3f8a4c 0 2px, #2a5c33 2px 3px);
}
.meter-right {
    right: 0;
    top: 219px;
    width: 15px;
    height: 89px;
    padding: 10px 2px 10px 6px;
    border-radius: 5px 0 0 5px;
    background: #4b4f5a;
}
.meter-right i {
    height: 42px;
    background: repeating-linear-gradient(transparent 0 2px, #4b4f5a 2px 3px), linear-gradient(#b8b04a, #3fa59a);
}
.pointer {
    position: absolute;
    left: 1839px;
    top: 675px;
    width: 14px;
    height: 20px;
    stroke-width: 1;
}
.watermark {
    position: absolute;
    inset: 21px 0 0;
    overflow: hidden;
    color: rgba(0, 0, 0, 0.16);
    font: 36px/126px "Noto Sans", sans-serif;
    pointer-events: none;
}
.watermark div {
    display: flex;
    margin-left: -10px;
}
.watermark div:nth-child(even) {
    margin-left: -143px;
}
.watermark span {
    flex: none;
    width: 265px;
}
```
